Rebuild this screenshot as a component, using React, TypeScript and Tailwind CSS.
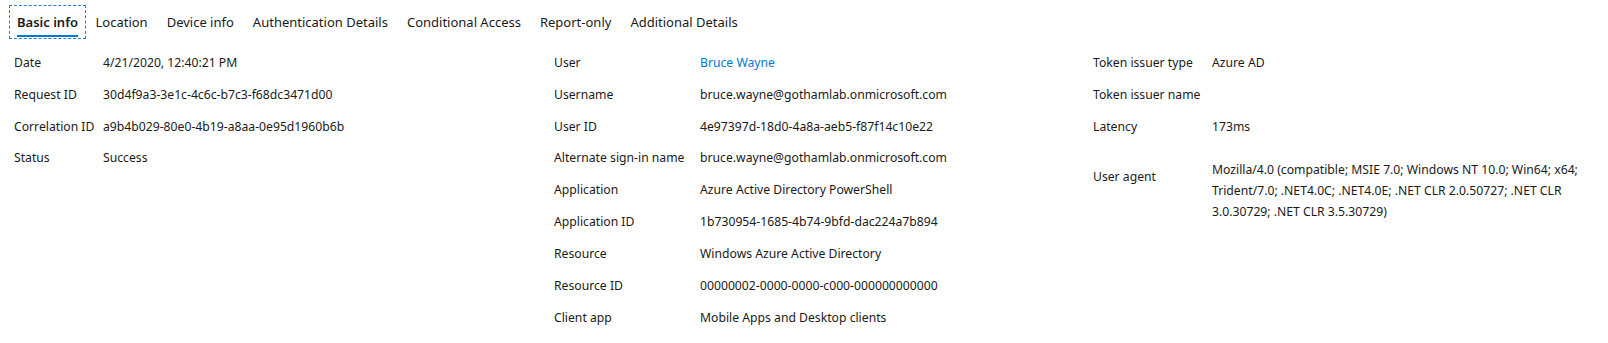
import React from "react";

type Row = { label: string; value: React.ReactNode; link?: boolean };

const col1: Row[] = [
  { label: "Date", value: "4/21/2020, 12:40:21 PM" },
  { label: "Request ID", value: "30d4f9a3-3e1c-4c6c-b7c3-f68dc3471d00" },
  { label: "Correlation ID", value: "a9b4b029-80e0-4b19-a8aa-0e95d1960b6b" },
  { label: "Status", value: "Success" },
];

const col2: Row[] = [
  { label: "User", value: "Bruce Wayne", link: true },
  { label: "Username", value: "bruce.wayne@gothamlab.onmicrosoft.com" },
  { label: "User ID", value: "4e97397d-18d0-4a8a-aeb5-f87f14c10e22" },
  { label: "Alternate sign-in name", value: "bruce.wayne@gothamlab.onmicrosoft.com" },
  { label: "Application", value: "Azure Active Directory PowerShell" },
  { label: "Application ID", value: "1b730954-1685-4b74-9bfd-dac224a7b894" },
  { label: "Resource", value: "Windows Azure Active Directory" },
  { label: "Resource ID", value: "00000002-0000-0000-c000-000000000000" },
  { label: "Client app", value: "Mobile Apps and Desktop clients" },
];

const col3: Row[] = [
  { label: "Token issuer type", value: "Azure AD" },
  { label: "Token issuer name", value: "" },
  { label: "Latency", value: "173ms" },
];

const tabs = [
  "Basic info",
  "Location",
  "Device info",
  "Authentication Details",
  "Conditional Access",
  "Report-only",
  "Additional Details",
];

function Rows({ rows, labelW }: { rows: Row[]; labelW: string }) {
  return (
    <>
      {rows.map((r) => (
        <div key={r.label} className="flex h-[31.85px] items-center">
          <div className={`${labelW} shrink-0 whitespace-nowrap`}>{r.label}</div>
          <div className={r.link ? "whitespace-nowrap text-[#0078d4]" : "whitespace-nowrap"}>{r.value}</div>
        </div>
      ))}
    </>
  );
}

export default function App() {
  return (
    <div
      className="h-[343px] w-[1608px] overflow-hidden bg-white text-[12.2px] leading-[20px] text-[#1b1a19]"
      style={{ fontFamily: '"Noto Sans", "Open Sans", sans-serif' }}
    >
      <div className="flex pl-[9px] pt-[5px] text-[13px]">
        {tabs.map((t, i) => (
          <div
            key={t}
            className={
              i === 0
                ? "relative flex h-[34px] items-center border border-dashed border-[#1e7fcf] px-[7px] font-semibold"
                : "flex h-[34px] items-center px-[9.5px]"
            }
          >
            {t}
            {i === 0 && (
              <div className="absolute bottom-[1px] left-[7px] right-[7px] h-[2px] bg-[#0078d4]" />
            )}
          </div>
        ))}
      </div>
      <div className="grid grid-cols-[540px_539px_1fr] pl-[14px] pt-[8px]">
        <div>
          <Rows rows={col1} labelW="w-[89px]" />
        </div>
        <div>
          <Rows rows={col2} labelW="w-[146px]" />
        </div>
        <div>
          <Rows rows={col3} labelW="w-[119px]" />
          <div className="flex">
            <div className="w-[119px] shrink-0 pt-[24px]">User agent</div>
            <div className="w-[380px] pt-[16px] leading-[21px]">
              Mozilla/4.0 (compatible; MSIE 7.0; Windows NT 10.0; Win64; x64; Trident/7.0; .NET4.0C; .NET4.0E; .NET CLR 2.0.50727; .NET CLR 3.0.30729; .NET CLR 3.5.30729)
            </div>
          </div>
        </div>
      </div>
    </div>
  );
}
